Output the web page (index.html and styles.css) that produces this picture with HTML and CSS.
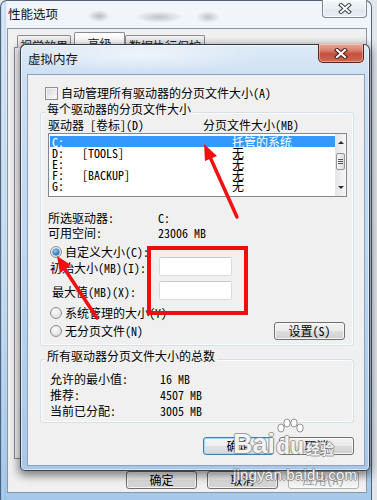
FILE: index.html
```html
<!DOCTYPE html>
<html lang="zh-CN">
<head>
<meta charset="utf-8">
<title>虚拟内存</title>
<link rel="stylesheet" href="styles.css">
</head>
<body>
<div class="outer">
  <div class="outer-titlebar">
    <span class="outer-title">性能选项</span>
    <span class="outer-close"><svg width="14" height="11" viewBox="0 0 14 11"><path d="M3 2 L11 9 M11 2 L3 9" stroke="#3a3f46" stroke-width="4" stroke-linecap="square"/><path d="M3 2 L11 9 M11 2 L3 9" stroke="#fff" stroke-width="2" stroke-linecap="square"/></svg></span>
  </div>
  <div class="outer-client">
    <div class="tabs">
      <span class="tab t1">视觉效果</span>
      <span class="tab t2 sel">高级</span>
      <span class="tab t3">数据执行保护</span>
    </div>
    <div class="tabpanel"></div>
    <div class="outer-buttons">
      <button class="btn obtn">确定</button>
      <button class="btn obtn">取消</button>
      <button class="btn obtn disabled">应用(A)</button>
    </div>
  </div>

  <div class="dialog">
    <div class="dlg-titlebar">
      <span class="dlg-title">虚拟内存</span>
      <span class="dlg-close"><svg width="14" height="11" viewBox="0 0 14 11"><path d="M3 2 L11 9 M11 2 L3 9" stroke="#4a1a12" stroke-width="4.2" stroke-linecap="square"/><path d="M3 2 L11 9 M11 2 L3 9" stroke="#fff" stroke-width="2.2" stroke-linecap="square"/></svg></span>
    </div>
    <div class="dlg-client">
      <div class="check-row"><span class="cbox"></span><span>自动管理所有驱动器的分页文件大小(A)</span></div>

      <div class="group g1">
        <div class="group-title">每个驱动器的分页文件大小</div>
        <div class="col-head"><span class="ch1">驱动器 [卷标](D)</span><span>分页文件大小(MB)</span></div>
        <div class="listbox">
          <div class="rows">
            <div class="row sel"><span class="c-drv">C:</span><span class="c-lbl"></span><span>托管的系统</span></div>
            <div class="row"><span class="c-drv">D:</span><span class="c-lbl">[TOOLS]</span><span>无</span></div>
            <div class="row"><span class="c-drv">E:</span><span class="c-lbl"></span><span>无</span></div>
            <div class="row"><span class="c-drv">F:</span><span class="c-lbl">[BACKUP]</span><span>无</span></div>
            <div class="row"><span class="c-drv">G:</span><span class="c-lbl"></span><span>无</span></div>
          </div>
          <div class="scroll">
            <div class="sb-btn"><span class="tri-up"></span></div>
            <div class="thumb"><span class="grip"></span></div>
            <div class="sb-space"></div>
            <div class="sb-btn down"><span class="tri-down"></span></div>
          </div>
        </div>
        <div class="sel-info">
          <div class="info-row"><span class="info-label">所选驱动器:</span><span>C:</span></div>
          <div class="info-row"><span class="info-label">可用空间:</span><span>23006 MB</span></div>
        </div>
        <div class="radio-row r1"><span class="radio on"><span class="dot"></span></span><span>自定义大小(C):</span></div>
        <div class="size-row s1"><span class="size-label">初始大小(MB)(I):</span><span class="size-input"></span></div>
        <div class="size-row s2"><span class="size-label l2">最大值(MB)(X):</span><span class="size-input"></span></div>
        <div class="radio-row r2"><span class="radio"></span><span>系统管理的大小(Y)</span></div>
        <div class="last-row">
          <div class="radio-row r3"><span class="radio"></span><span>无分页文件(N)</span></div>
          <button class="btn set-btn">设置(S)</button>
        </div>
      </div>

      <div class="group g2">
        <div class="group-title">所有驱动器分页文件大小的总数</div>
        <div class="totals">
          <div class="tot-row"><span class="info-label">允许的最小值:</span><span>16 MB</span></div>
          <div class="tot-row"><span class="info-label">推荐:</span><span>4507 MB</span></div>
          <div class="tot-row"><span class="info-label">当前已分配:</span><span>3005 MB</span></div>
        </div>
      </div>

      <div class="dlg-buttons">
        <button class="btn ok focus">确定</button>
        <button class="btn cancel">取消</button>
      </div>
    </div>
  </div>

  <svg class="annot" width="377" height="500" viewBox="0 0 377 500">
    <rect x="149" y="248" width="97" height="65" fill="none" stroke="#f20d0d" stroke-width="4"/>
    <line x1="237" y1="217" x2="210" y2="157" stroke="#f21010" stroke-width="3.5" stroke-linecap="round"/>
    <polygon points="204,144 217,156 205,161" fill="#f21010"/>
    <line x1="97" y1="318" x2="64" y2="268" stroke="#f21010" stroke-width="3.5" stroke-linecap="round"/>
    <polygon points="57,256 71,265 60,273" fill="#f21010"/>
  </svg>

  <div class="watermark">
    <div class="wm-logo">
      <span class="wm-bai">Bai</span>
      <span class="wm-paw">
        <svg width="30" height="20" viewBox="0 0 30 20">
          <g fill="rgba(255,255,255,0.9)" stroke="rgba(120,120,120,0.8)" stroke-width="1">
            <ellipse cx="6" cy="10" rx="3.2" ry="4"/>
            <ellipse cx="12" cy="5" rx="3.2" ry="4"/>
            <ellipse cx="19" cy="5" rx="3.2" ry="4"/>
            <ellipse cx="25" cy="10" rx="3.2" ry="4"/>
          </g>
        </svg>
        <span class="wm-du">du</span>
      </span>
      <span class="wm-jy">经验</span>
    </div>
    <div class="wm-url">jingyan.baidu.com</div>
  </div>
</div>
</body>
</html>
```

FILE: styles.css
```css
* { box-sizing: border-box; }
html, body { margin: 0; padding: 0; }
body {
  width: 377px;
  height: 500px;
  overflow: hidden;
  background: #e3e7ec;
  font-family: "Noto Sans Mono CJK SC", "Noto Sans CJK SC", "Liberation Sans", sans-serif;
  font-size: 12px;
  color: #000;
}

.outer {
  position: relative;
  width: 372px;
  height: 500px;
  border: 1px solid #50627a;
  border-bottom: none;
  border-radius: 7px 7px 0 0;
  padding: 0 4px 0 6px;
  background:
    linear-gradient(90deg, rgba(120,170,220,0.55) 0, rgba(200,225,245,0.3) 2px, rgba(140,185,230,0.5) 4px, transparent 6px),
    linear-gradient(180deg, #f2f6fa 0%, #eaf1f8 20%, #d6e6f5 60%, #a6c8ea 100%);
}

.outer-titlebar {
  height: 27px;
  display: flex;
  justify-content: space-between;
  align-items: flex-start;
  background:
    radial-gradient(ellipse 11px 6px at 92px 15px, rgba(70,80,90,0.35), transparent),
    radial-gradient(ellipse 24px 6px at 152px 16px, rgba(70,80,90,0.3), transparent),
    radial-gradient(ellipse 12px 6px at 201px 16px, rgba(70,80,90,0.3), transparent);
}
.outer-title {
  margin: 6px 0 0 1px;
  font-family: "Noto Sans CJK SC", sans-serif;
  font-size: 12.5px;
  line-height: 14px;
  color: #111;
}
.outer-close {
  width: 45px;
  height: 18px;
  margin-top: -1px;
  border: 1px solid #7d8590;
  border-top: none;
  border-radius: 0 0 4px 4px;
  background: linear-gradient(180deg, #f4f7fa 0%, #e9eef4 50%, #dfe6ee 51%, #e8eef5 100%);
  box-shadow: inset 0 0 0 1px rgba(255,255,255,0.8);
  display: flex;
  align-items: center;
  justify-content: center;
}

.outer-client {
  height: 465px;
  background: #f0f0f0;
  border: 1px solid #8895a6;
  padding: 3px 6px 0 6px;
  display: flex;
  flex-direction: column;
}
.tabs {
  display: flex;
  align-items: flex-end;
  height: 16px;
  padding-left: 3px;
  margin-bottom: -1px;
  position: relative;
  z-index: 1;
}
.tab {
  height: 13px;
  border: 1px solid #898c95;
  border-bottom: none;
  border-radius: 2px 2px 0 0;
  background: linear-gradient(180deg, #f3f3f3, #e2e2e2);
  font-size: 12px;
  line-height: 12px;
  padding-top: 4px;
  text-align: center;
  overflow: hidden;
  white-space: nowrap;
  color: #222;
}
.t1 { width: 54px; }
.t2 { width: 51px; margin-left: 3px; }
.t3 { width: 80px; }
.tab.sel {
  height: 16px;
  background: #fcfcfc;
  padding-top: 5px;
}
.tabpanel {
  height: 412px;
  border: 1px solid #898c95;
  background: #f7f7f7;
}
.outer-buttons {
  display: flex;
  justify-content: flex-end;
  gap: 10px;
  margin-top: 12px;
  padding-right: 1px;
}
.obtn { width: 71px; }

.btn {
  font: inherit;
  color: #000;
  padding: 0;
  margin: 0;
  height: 18px;
  line-height: 16px;
  text-align: center;
  border: 1px solid #707070;
  border-radius: 3px;
  background: linear-gradient(180deg, #f2f2f2 0%, #ebebeb 48%, #dddddd 52%, #cfcfcf 100%);
  box-shadow: inset 0 0 0 1px rgba(252,252,252,0.85);
}
.btn.disabled {
  color: #9a9a9a;
  border-color: #adb2b5;
  background: #f4f4f4;
}
.btn.focus {
  border-color: #3c7fb1;
  box-shadow: inset 0 0 0 1px #9fdaf6;
  background: linear-gradient(180deg, #f6f6f6 0%, #eeeeee 48%, #e2e2e2 52%, #d8d8d8 100%);
}

.dialog {
  position: absolute;
  z-index: 2;
  left: 19px;
  top: 43px;
  width: 350px;
  height: 427px;
  border: 1px solid rgba(25,35,50,0.85);
  border-radius: 6px 6px 5px 5px;
  padding: 0 4px 4px 6px;
  display: flex;
  flex-direction: column;
  background:
    radial-gradient(ellipse 120px 18px at 120px 10px, rgba(255,255,255,0.55), transparent),
    linear-gradient(180deg, #dfeaf6 0%, #cde0f3 7%, #bcd5ee 55%, #a9c8e8 100%);
  box-shadow: inset 0 0 0 1px rgba(255,255,255,0.55), 0 3px 9px 2px rgba(0,0,0,0.45);
}
.dlg-titlebar {
  height: 29px;
  display: flex;
  justify-content: space-between;
  align-items: flex-start;
}
.dlg-title {
  margin: 7px 0 0 1px;
  font-family: "Noto Sans CJK SC", sans-serif;
  font-size: 12.5px;
  line-height: 14px;
  color: #111;
}
.dlg-close {
  width: 46px;
  height: 19px;
  margin-top: -1px;
  margin-right: 1px;
  border: 1px solid #5e2219;
  border-top: none;
  border-radius: 0 0 5px 5px;
  background: linear-gradient(180deg, #e9a999 0%, #d98172 35%, #c5503e 55%, #cf6a52 100%);
  box-shadow: inset 0 0 0 1px rgba(255,210,200,0.5);
  display: flex;
  align-items: center;
  justify-content: center;
}
.dlg-client {
  flex: 1;
  background: #f0f0f0;
  border: 1px solid #8ca1ba;
  padding: 11px 10px 0 12px;
  display: flex;
  flex-direction: column;
}

.check-row {
  display: flex;
  align-items: center;
  height: 14px;
  margin-left: 5px;
  gap: 3px;
  line-height: 14px;
}
.cbox {
  width: 13px;
  height: 13px;
  border: 1px solid #8e8f8f;
  background: linear-gradient(135deg, #d6d6d6, #fbfbfb);
  box-shadow: inset 0 0 0 1px #f2f2f2;
}

.group {
  border: 1px solid #d5dfe5;
  border-radius: 3px;
  padding: 0 6px 5px 7px;
  box-shadow: inset 0 0 0 1px rgba(255,255,255,0.7);
}
.g1 { margin-top: 12px; }
.g2 { margin-top: 13px; padding-bottom: 3px; }
.group-title {
  width: max-content;
  margin: -11px 0 0 -3px;
  padding: 0 2px;
  height: 14px;
  line-height: 14px;
  background: #f0f0f0;
}
.col-head {
  display: flex;
  margin-top: 2px;
  height: 14px;
  line-height: 14px;
}
.ch1 { width: 155px; }

.listbox {
  margin-top: 1px;
  height: 64px;
  border: 1px solid #828790;
  background: #fff;
  display: flex;
}
.rows {
  flex: 1;
  padding: 2px 0 0 1px;
  overflow: hidden;
}
.row {
  display: flex;
  height: 11px;
  line-height: 11px;
  white-space: nowrap;
}
.row.sel { background: #3399ff; color: #fff; }
.c-drv { width: 32px; padding-left: 2px; }
.c-lbl { width: 150px; }

.scroll {
  width: 11px;
  background: linear-gradient(90deg, #e4e4e4, #f5f5f5);
  display: flex;
  flex-direction: column;
  align-items: center;
}
.sb-btn {
  height: 16px;
  width: 100%;
  display: flex;
  align-items: center;
  justify-content: center;
}
.sb-btn.down { height: 18px; }
.tri-up {
  width: 0; height: 0;
  border-left: 3px solid transparent;
  border-right: 3px solid transparent;
  border-bottom: 3px solid #2c2c2c;
}
.tri-down {
  width: 0; height: 0;
  border-left: 3px solid transparent;
  border-right: 3px solid transparent;
  border-top: 3px solid #2c2c2c;
}
.thumb {
  margin-top: 3px;
  width: 9px;
  height: 17px;
  border: 1px solid #959595;
  border-radius: 2px;
  background: linear-gradient(90deg, #f6f6f6, #dcdcdc);
  display: flex;
  align-items: center;
  justify-content: center;
}
.grip {
  width: 5px;
  height: 5px;
  background: repeating-linear-gradient(180deg, #555 0 1px, transparent 1px 2px);
}
.sb-space { flex: 1; }

.sel-info { margin-top: 13px; }
.info-row { display: flex; height: 15px; line-height: 15px; }
.info-label { width: 110px; }

.radio-row {
  display: flex;
  align-items: center;
  height: 12px;
  line-height: 12px;
  gap: 3px;
  margin-left: 2px;
  white-space: nowrap;
}
.r1 { margin-top: 6px; }
.r2 { margin-top: 7px; }
.radio {
  width: 12px;
  height: 12px;
  border-radius: 50%;
  border: 1px solid #8e8f8f;
  background: radial-gradient(circle at 40% 35%, #fefefe, #d3d3d3);
  display: flex;
  align-items: center;
  justify-content: center;
}
.dot {
  width: 6px;
  height: 6px;
  border-radius: 50%;
  background: radial-gradient(circle at 40% 35%, #8fd6ff, #1b6fc4 70%, #174b80);
  box-shadow: 0 0 0 0.5px #1c4a7a;
}

.size-row {
  display: flex;
  align-items: center;
  height: 19px;
  margin-left: 2px;
}
.s1 { margin-top: -1px; }
.s2 { margin-top: 5px; }
.size-label { width: 109px; padding-top: 2px; line-height: 14px; white-space: nowrap; }
.l2 { padding-left: 2px; }
.size-input {
  width: 73px;
  height: 19px;
  background: #fff;
  border: 1px solid #d9dde2;
  border-top-color: #c4c8ce;
  border-radius: 2px;
}

.last-row {
  display: flex;
  justify-content: space-between;
  align-items: center;
  height: 18px;
  margin-top: 3px;
}
.last-row .radio-row { margin-top: 0; }
.set-btn { width: 71px; margin-right: 2px; }

.totals { margin-top: 8px; }
.tot-row { display: flex; height: 16px; line-height: 16px; margin-left: 2px; }

.dlg-buttons {
  display: flex;
  justify-content: flex-end;
  gap: 5px;
  margin-top: 14px;
}
.ok { width: 71px; }
.cancel { width: 75px; }

.annot {
  position: absolute;
  z-index: 3;
  left: -1px;
  top: -1px;
  pointer-events: none;
}

.watermark {
  position: absolute;
  z-index: 4;
  left: 232px;
  top: 414px;
  pointer-events: none;
  color: rgba(255,255,255,0.92);
  text-shadow: 1px 0 0 rgba(130,130,130,0.75), -1px 0 0 rgba(130,130,130,0.75), 0 1px 0 rgba(130,130,130,0.75), 0 -1px 0 rgba(130,130,130,0.75);
  font-family: "Liberation Sans", sans-serif;
}
.wm-logo {
  display: flex;
  align-items: flex-end;
  height: 42px;
}
.wm-bai {
  font-weight: bold;
  font-size: 27px;
  line-height: 26px;
}
.wm-paw {
  display: flex;
  flex-direction: column;
  align-items: center;
  margin-left: 0;
}
.wm-du {
  font-weight: bold;
  font-size: 23px;
  line-height: 21px;
  margin-top: -2px;
}
.wm-jy {
  font-family: "Noto Sans CJK SC", sans-serif;
  font-weight: bold;
  font-size: 14px;
  line-height: 18px;
  margin-left: 1px;
}
.wm-url {
  margin-top: 10px;
  font-size: 15px;
  line-height: 16px;
  letter-spacing: 0.2px;
}
```
